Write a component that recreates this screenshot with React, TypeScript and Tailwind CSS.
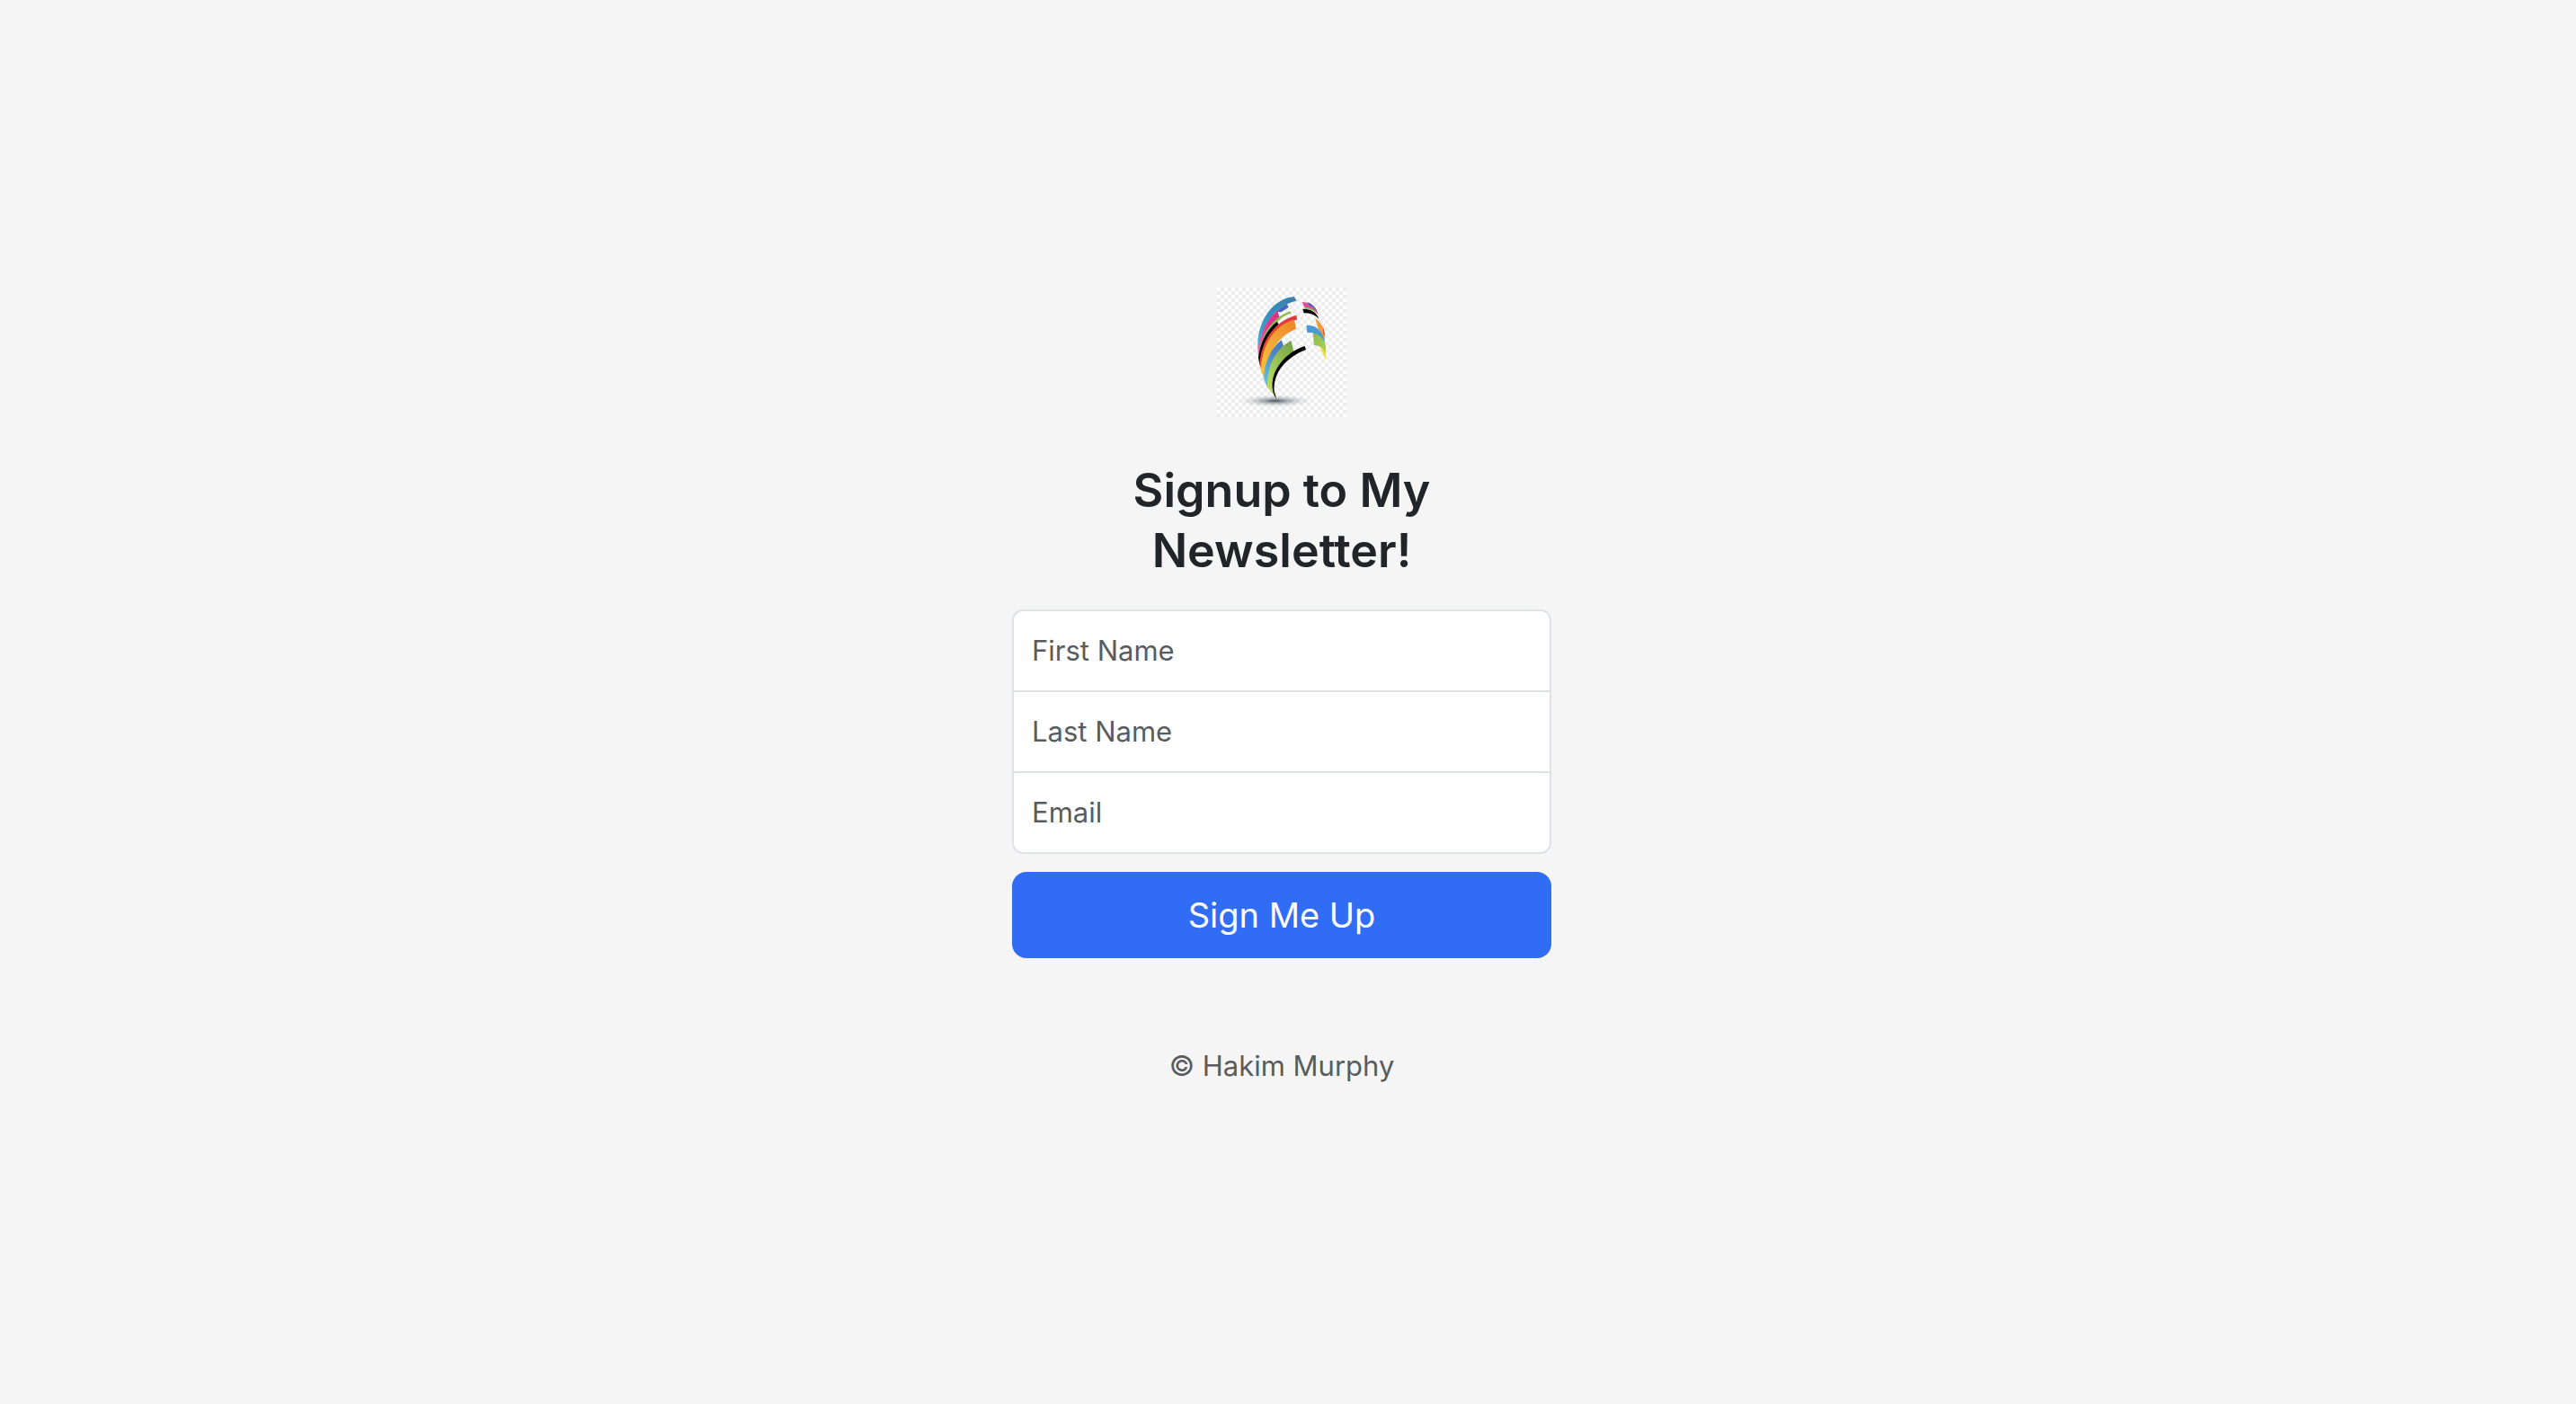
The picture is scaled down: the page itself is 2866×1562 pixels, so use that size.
import React from "react";

function Logo() {
  return (
    <svg viewBox="42 30 432 432" className="size-36" role="img" aria-label="Logo">
      <defs>
        <pattern id="checker" x="42" y="30" width="24" height="24" patternUnits="userSpaceOnUse">
          <rect width="24" height="24" fill="#fefefe" />
          <rect width="12" height="12" x="12" fill="#ededed" />
          <rect y="12" width="12" height="12" fill="#ededed" />
        </pattern>
        <radialGradient id="shadow">
          <stop offset="0" stopColor="#3c4650" stopOpacity="0.95" />
          <stop offset="0.3" stopColor="#66707c" stopOpacity="0.6" />
          <stop offset="0.65" stopColor="#8c949c" stopOpacity="0.25" />
          <stop offset="1" stopColor="#a0a6ac" stopOpacity="0" />
        </radialGradient>
        <linearGradient id="blue" x1="0" y1="1" x2="1" y2="0">
          <stop offset="0" stopColor="#35b4dc" />
          <stop offset="0.5" stopColor="#358fbb" />
          <stop offset="1" stopColor="#3a7fae" />
        </linearGradient>
        <linearGradient id="pink" x1="0" y1="1" x2="1" y2="0">
          <stop offset="0" stopColor="#d67cb4" />
          <stop offset="0.6" stopColor="#e5358c" />
          <stop offset="1" stopColor="#d62f86" />
        </linearGradient>
        <linearGradient id="red" x1="0" y1="1" x2="1" y2="0">
          <stop offset="0" stopColor="#f0502c" />
          <stop offset="1" stopColor="#dc3740" />
        </linearGradient>
        <linearGradient id="orange" x1="0" y1="1" x2="1" y2="0">
          <stop offset="0" stopColor="#f7c63c" />
          <stop offset="0.45" stopColor="#f2aa35" />
          <stop offset="1" stopColor="#f08228" />
        </linearGradient>
        <linearGradient id="sky" x1="0" y1="1" x2="1" y2="0">
          <stop offset="0" stopColor="#62cbe8" />
          <stop offset="0.6" stopColor="#4b86c4" />
          <stop offset="1" stopColor="#4978bd" />
        </linearGradient>
        <linearGradient id="green" x1="0" y1="1" x2="0.8" y2="0">
          <stop offset="0" stopColor="#c5df6c" />
          <stop offset="0.4" stopColor="#a3cb5b" />
          <stop offset="1" stopColor="#7aa548" />
        </linearGradient>
        <linearGradient id="rightGreen" x1="0" y1="0" x2="1" y2="1">
          <stop offset="0" stopColor="#86b94e" />
          <stop offset="1" stopColor="#b4d455" />
        </linearGradient>
      </defs>
      <rect x="42" y="30" width="432" height="432" fill="url(#checker)" />
      <ellipse cx="236" cy="408" rx="125" ry="20" fill="url(#shadow)" />
      <path d="M275 84 L281 96 L256 112 L240 110 C251 99 262 91 275 84Z" fill="#4b64bd" />
      <path d="M299 60 L308 74 C282 79 258 92 238 111 C210 138 190 180 179 240 C174 196 186 148 211 114 C234 82 264 64 299 60Z" fill="url(#blue)" />
      <path d="M244 106 L252 136 C218 160 193 199 181 262 L178 240 C184 190 204 140 244 106Z" fill="url(#pink)" />
      <path d="M287 109 L290 115 C238 134 200 180 181 268 C188 184 226 130 287 109Z" fill="#86bd48" />
      <path d="M243 143 L249 157 C216 184 194 226 185 290 L180 264 C186 216 206 172 243 143Z" fill="#000" />
      <path d="M307 122 L309 137 C246 152 206 206 190 306 L184 286 C190 204 236 140 307 122Z" fill="url(#red)" />
      <path d="M300 137 L306 169 C250 188 208 246 200 338 L188 304 C194 218 232 156 300 137Z" fill="url(#orange)" />
      <path d="M257 205 L264 224 C236 254 213 296 211 366 L198 334 C200 276 222 234 257 205Z" fill="url(#sky)" />
      <path d="M289 206 L299 246 C254 274 232 314 232 390 L210 362 C208 296 232 240 289 206Z" fill="url(#green)" />
      <path d="M335 225 L339 237 C272 262 228 316 233 376 L241 403 C219 372 222 322 252 284 C274 255 302 236 335 225Z" fill="#000" />
      <path d="M326 78 C346 78 362 86 374 104 L381 122 C368 104 354 97 334 96Z" fill="#dd4f9c" />
      <path d="M344 79 C360 85 372 96 378 114 C370 100 360 92 350 90Z" fill="#4d62b8" />
      <path d="M334 95 C352 95 366 101 377 118 C364 105 350 101 336 101Z" fill="#86b94e" />
      <path d="M328 101 C352 100 374 110 383 136 C370 120 352 114 332 115Z" fill="#000" />
      <path d="M369 133 C386 144 399 160 402 190 L401 208 L380 166Z" fill="#f39a36" />
      <path d="M396 158 L402 190 L397 186Z" fill="#d6483d" />
      <path d="M362 176 C382 178 398 190 405 226 L404 260 C396 232 384 222 366 222Z" fill="url(#rightGreen)" />
      <path d="M340 156 C368 153 394 168 403 216 C390 188 370 178 343 180Z" fill="#4b9ad6" />
      <path d="M389 228 C396 234 401 242 404 250 L403 280 C402 262 398 252 390 240Z" fill="#f5dc32" />
    </svg>
  );
}

const fields = [
  { id: "first-name", label: "First Name", type: "text" },
  { id: "last-name", label: "Last Name", type: "text" },
  { id: "email", label: "Email", type: "email" },
];

export default function App() {
  return (
    <main className="flex min-h-screen items-center justify-center bg-[#f5f5f5] pr-3.5 font-['Inter',sans-serif] text-[31px] leading-[48px]">
      <form className="flex w-full max-w-[600px] flex-col pb-8 text-center" onSubmit={(e) => e.preventDefault()}>
        <div className="mb-12 flex justify-center">
          <Logo />
        </div>
        <h1 className="mx-auto mb-8 max-w-[400px] text-[52px] leading-[67px] font-semibold text-[#212529]">
          Signup to My Newsletter!
        </h1>
        <div className="divide-y-2 divide-[#dee2e6] rounded-xl border-2 border-[#dee2e6] bg-white text-left">
          {fields.map((f) => (
            <div key={f.id} className="grid items-center">
              <input
                id={f.id}
                type={f.type}
                placeholder=" "
                className="peer col-start-1 row-start-1 h-22 w-full rounded-xl px-5 text-[#212529] outline-none"
              />
              <label
                htmlFor={f.id}
                className="pointer-events-none invisible col-start-1 row-start-1 px-5 text-[#595c5f] peer-placeholder-shown:visible"
              >
                {f.label}
              </label>
            </div>
          ))}
        </div>
        <button type="submit" className="mt-5 h-24 w-full rounded-2xl bg-[#316cf4] text-[38px] text-white">
          Sign Me Up
        </button>
        <p className="mt-24 text-[#595c5f]">© Hakim Murphy</p>
      </form>
    </main>
  );
}
